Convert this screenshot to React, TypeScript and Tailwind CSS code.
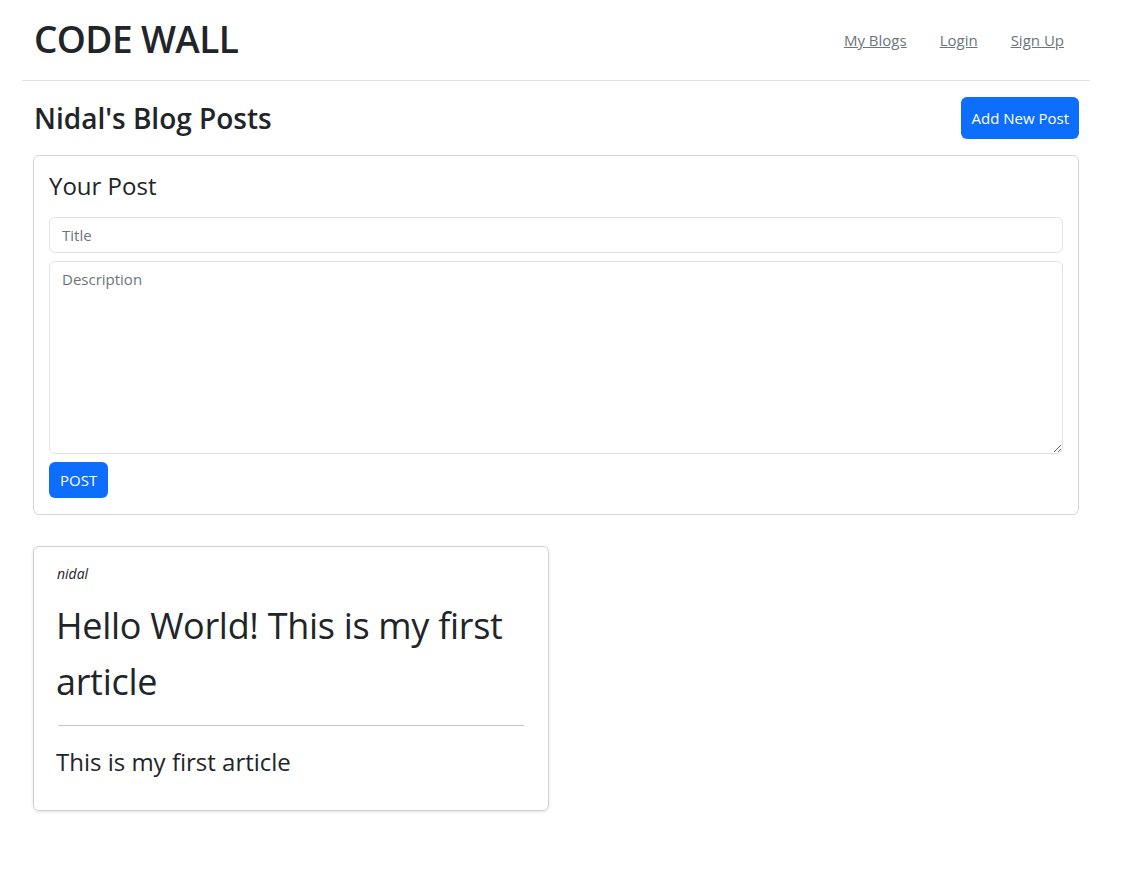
import React from "react";

const font = { fontFamily: '"Open Sans", "Noto Sans", sans-serif' };

function NavBar() {
  return (
    <nav className="ml-[22px] flex h-[81px] w-[1068px] items-center justify-between border-b border-[#dee2e6] pl-3 pr-[26px]">
      <a className="-mt-[4px] text-[37px] font-semibold leading-none tracking-[-0.6px] text-[#212529]" href="#">
        CODE WALL
      </a>
      <ul className="flex items-center gap-[33px] text-[15px] text-[#6c757d]">
        <li>
          <a className="underline" href="#">My Blogs</a>
        </li>
        <li>
          <a className="underline" href="#">Login</a>
        </li>
        <li>
          <a className="underline" href="#">Sign Up</a>
        </li>
      </ul>
    </nav>
  );
}

function PostForm() {
  return (
    <div className="mt-4 rounded-md border border-[#d4d4d4] px-[15px] py-4">
      <h4 className="text-[24px] leading-[1.2] text-[#212529]">Your Post</h4>
      <form className="mt-4 flex flex-col" onSubmit={(e) => e.preventDefault()}>
        <input
          className="h-[36px] rounded-md border border-[#dee2e6] px-3 text-[15px] text-[#212529] placeholder:text-[#6c757d] outline-none"
          placeholder="Title"
        />
        <textarea
          className="mt-2 h-[193px] rounded-md border border-[#dee2e6] px-3 py-[6px] text-[15px] text-[#212529] placeholder:text-[#6c757d] outline-none"
          placeholder="Description"
        />
        <div className="mt-2">
          <button className="h-[36px] rounded-md bg-[#0d6efd] px-[11px] text-[15px] text-white" type="submit">
            POST
          </button>
        </div>
      </form>
    </div>
  );
}

function PostCard() {
  return (
    <div className="mt-[31px] w-[516px] rounded-md border border-[#d0d0d0] pb-[33px] pl-[22px] pr-6 pt-[16px] shadow-[0_1px_3px_rgba(0,0,0,0.12)]">
      <p className="pl-px text-[14px] italic leading-[1.5] text-[#212529]">nidal</p>
      <h1 className="mt-[14px] text-[36px] leading-[56px] tracking-[-0.3px] text-[#212529]">
        Hello World! This is my first article
      </h1>
      <hr className="ml-[2px] mt-[15px] border-t border-[#c6c6c6]" />
      <p className="mt-[22px] text-[24px] leading-[1.2] text-[#212529]">This is my first article</p>
    </div>
  );
}

export default function App() {
  return (
    <div className="min-h-screen bg-white" style={font}>
      <NavBar />
      <main className="ml-[33px] w-[1046px] pt-4">
        <div className="flex items-center justify-between">
          <h2 className="pl-px text-[28px] font-semibold text-[#212529]">Nidal's Blog Posts</h2>
          <button className="h-[42px] rounded-md bg-[#0d6efd] px-[10px] text-[15px] text-white">Add New Post</button>
        </div>
        <PostForm />
        <PostCard />
      </main>
    </div>
  );
}
